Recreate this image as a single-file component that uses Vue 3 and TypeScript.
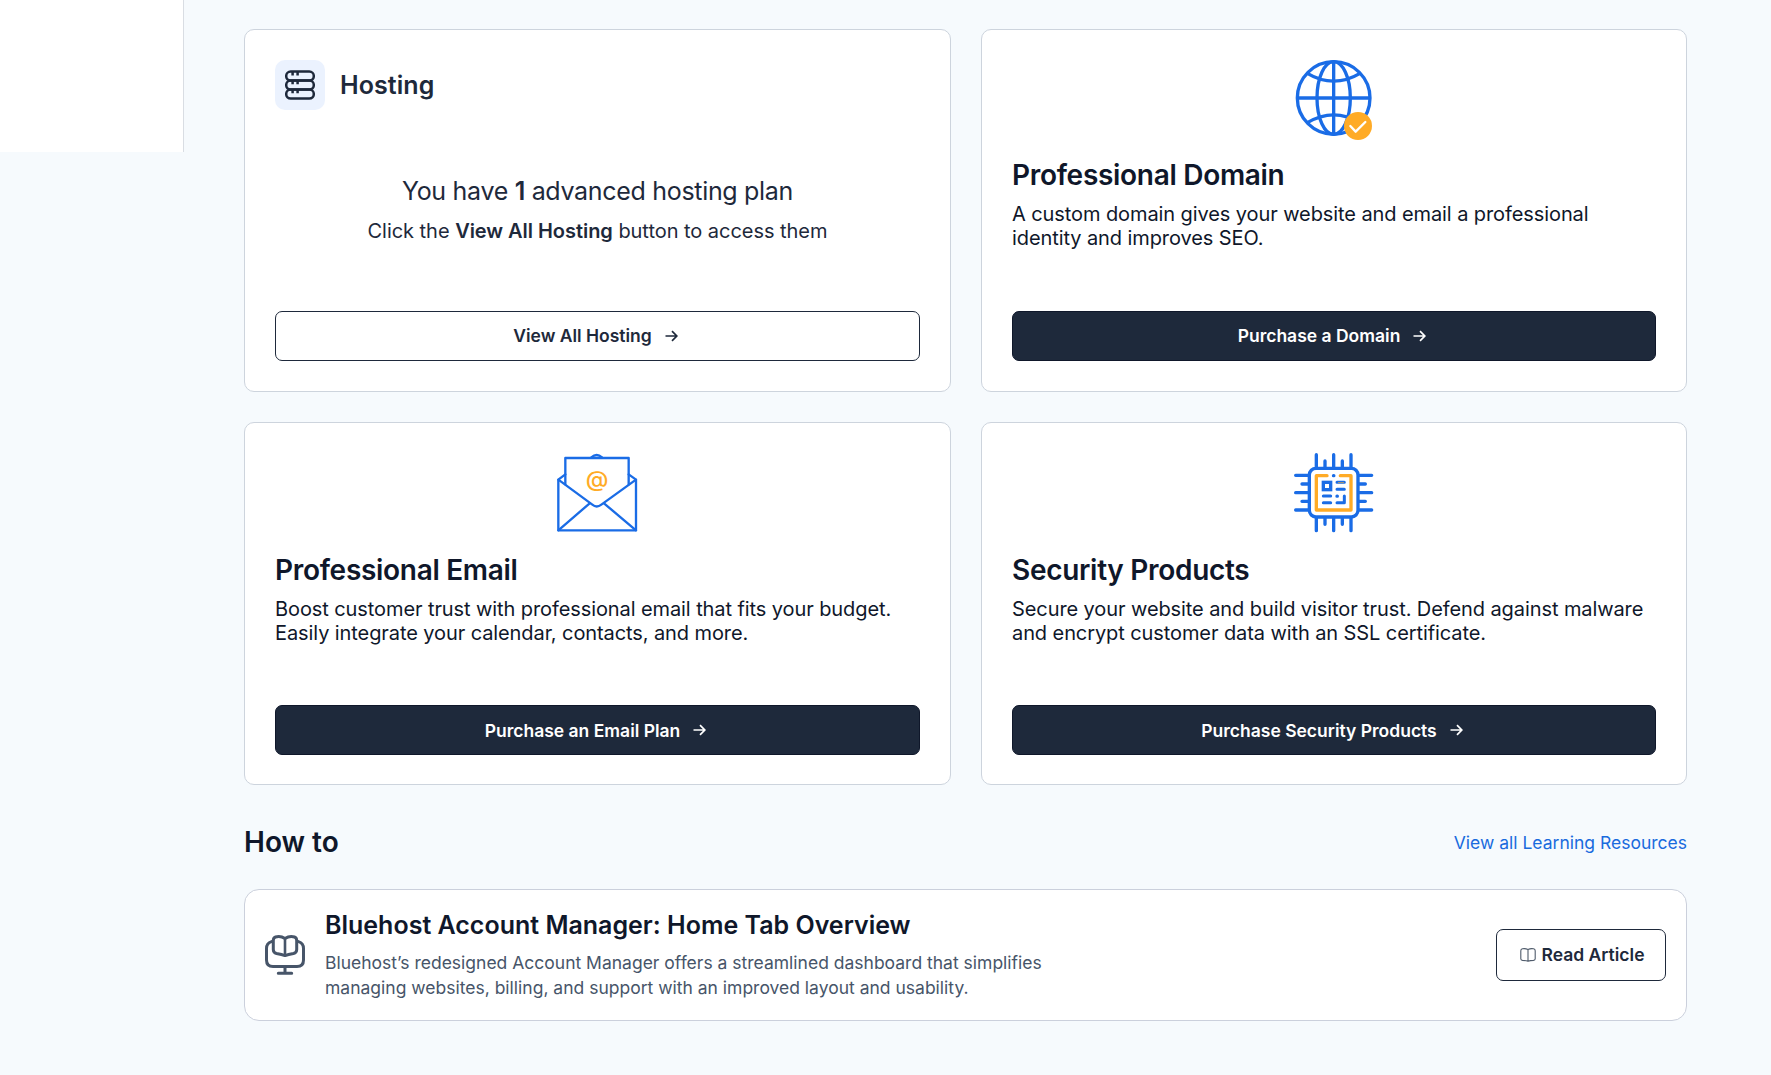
<script setup lang="ts">
interface Product {
  id: 'domain' | 'email' | 'security'
  title: string
  lines: string[]
  action: string
}

const products: Product[] = [
  {
    id: 'domain',
    title: 'Professional Domain',
    lines: ['A custom domain gives your website and email a professional', 'identity and improves SEO.'],
    action: 'Purchase a Domain',
  },
  {
    id: 'email',
    title: 'Professional Email',
    lines: ['Boost customer trust with professional email that fits your budget.', 'Easily integrate your calendar, contacts, and more.'],
    action: 'Purchase an Email Plan',
  },
  {
    id: 'security',
    title: 'Security Products',
    lines: ['Secure your website and build visitor trust. Defend against malware', 'and encrypt customer data with an SSL certificate.'],
    action: 'Purchase Security Products',
  },
]
</script>

<template>
  <div class="page">
    <aside class="sidebar"></aside>
    <main class="content">
      <section class="grid">
        <article class="card">
          <header class="card-head">
            <span class="badge">
              <svg width="30" height="30" viewBox="0 0 30 30" fill="none" stroke="#1e293b" stroke-width="2.5">
                <rect x="1.2" y="1.6" width="27.6" height="9" rx="4.5" />
                <rect x="1.2" y="10.6" width="27.6" height="9" rx="4.5" />
                <rect x="1.2" y="19.6" width="27.6" height="9" rx="4.5" />
                <path d="M7.6 2v3.4M12.6 2v3.4M7.6 11v3.2M12.6 11v3.2M7.6 20v3.2M12.6 20v3.2" />
              </svg>
            </span>
            <h2 class="head-title">Hosting</h2>
          </header>
          <div class="summary">
            <p class="plan">You have <b>1</b> advanced hosting plan</p>
            <p class="hint">Click the <b>View All Hosting</b> button to access them</p>
          </div>
          <button class="btn outline">
            <span>View All Hosting</span>
            <svg class="arrow" width="13" height="12" viewBox="0 0 13 12"><path d="M0.5 6H12M7 1.2L11.8 6L7 10.8" /></svg>
          </button>
        </article>

        <article v-for="p in products" :key="p.id" class="card" :class="p.id">
          <svg v-if="p.id === 'domain'" class="art" viewBox="72 60 240 240" fill="none" stroke="#1a6ce6" stroke-width="10">
            <circle cx="191" cy="174" r="109" />
            <path d="M191 64V284M81 174H301" />
            <ellipse cx="191" cy="174" rx="50" ry="109" />
            <path d="M112 100Q191 147 270 100M112 248Q191 201 270 248" />
            <circle cx="264" cy="258" r="42" fill="#ffab26" stroke="none" />
            <path d="M241 258L257 275L286 246" stroke="#fff" stroke-width="7" stroke-linecap="round" stroke-linejoin="round" />
          </svg>
          <svg v-else-if="p.id === 'email'" class="art" viewBox="84 39 240 240" fill="none" stroke="#1a6ce6" stroke-width="7" stroke-linejoin="round" stroke-linecap="round">
            <path d="M106 133V54H296V133" />
            <path d="M184 52Q200 38 216 52" />
            <path d="M106 103L85 119V271H318V119L296 103" />
            <path d="M85 119L187 194Q200 205 214 194L318 119" />
            <path d="M85 271L179 190M318 271L222 190" />
            <text x="201" y="141" text-anchor="middle" textLength="68" lengthAdjust="spacingAndGlyphs" class="at">@</text>
          </svg>
          <svg v-else class="art" viewBox="72 39 240 240" fill="none" stroke="#1a6ce6" stroke-width="10" stroke-linecap="round" stroke-linejoin="round">
            <rect x="118" y="85" width="146" height="146" rx="20" />
            <path d="M139 44V82M191 44V82M243 44V82M165 63V82M217 63V82" />
            <path d="M139 234V272M191 234V272M243 234V272M165 234V253M217 234V253" />
            <path d="M77 106H115M77 158H115M77 210H115M96 132H115M96 184H115" />
            <path d="M267 106H305M267 158H305M267 210H305M267 132H286M267 184H286" />
            <path d="M171 107H139V210H243V107H211" stroke="#ffab26" />
            <path d="M190.500 107H191.500M201 168.500H202" />
            <rect x="160" y="127" width="22" height="22" stroke-linejoin="miter" />
            <path d="M201 127H223M201 148H223M160 168H182M160 188H182M201 188H223V168" stroke-width="9" />
            <path d="M205 128H221" stroke="#b59a68" stroke-width="3" />
          </svg>
          <h2 class="title">{{ p.title }}</h2>
          <p class="desc"><span v-for="line in p.lines" :key="line">{{ line }}</span></p>
          <button class="btn solid">
            <span>{{ p.action }}</span>
            <svg class="arrow" width="13" height="12" viewBox="0 0 13 12"><path d="M0.5 6H12M7 1.2L11.8 6L7 10.8" /></svg>
          </button>
        </article>
      </section>

      <header class="howto-head">
        <h2 class="howto-title">How to</h2>
        <a class="all-link">View all Learning Resources</a>
      </header>

      <article class="howto">
        <svg class="monitor" width="40" height="40" viewBox="0 0 40 40" fill="none" stroke="#475569" stroke-width="3" stroke-linecap="round" stroke-linejoin="round">
          <path d="M6.500 6.600Q1.500 8 1.500 13.500V25Q1.500 31.500 8 31.500H32Q38.500 31.500 38.500 25V13.500Q38.500 8 33.500 6.600" />
          <path d="M20 3.600Q15.500 0.500 10.500 2Q8.300 2.700 8.300 5.500V14.500Q8.300 17.700 11.500 18.500Q17 19.300 20 20.600Q23 19.300 28.500 18.500Q31.700 17.700 31.700 14.500V5.500Q31.700 2.700 29.500 2Q24.500 0.500 20 3.600" />
          <path d="M20 4V20" stroke-width="2.600" />
          <path d="M20 32V38M13.300 38.300H26.700" />
        </svg>
        <div class="howto-text">
          <h3>Bluehost Account Manager: Home Tab Overview</h3>
          <p><span>Bluehost’s redesigned Account Manager offers a streamlined dashboard that simplifies</span><span>managing websites, billing, and support with an improved layout and usability.</span></p>
        </div>
        <button class="read">
          <svg width="16" height="14" viewBox="0 0 16 14" fill="none" stroke="#4f5b6b" stroke-width="1.100" stroke-linejoin="round">
            <path d="M8 1.500Q5.500 0.300 2.500 0.800Q0.800 1.100 0.800 2.800V10.800Q0.800 12.300 2.500 12.400Q6 12.400 8 13.300Q10 12.400 13.500 12.400Q15.200 12.300 15.200 10.800V2.800Q15.200 1.100 13.500 0.800Q10.500 0.300 8 1.500V13" />
          </svg>
          <span>Read Article</span>
        </button>
      </article>
    </main>
  </div>
</template>

<style>
body {
  background: #f6fafd;
}
</style>

<style scoped>
.page {
  box-sizing: border-box;
  display: flex;
  align-items: flex-start;
  height: 1075px;
  overflow: hidden;
  background: #f6fafd;
  color: #0f172a;
  font-family: Inter, "Liberation Sans", sans-serif;
}
.page * {
  box-sizing: border-box;
}
h2, h3, p {
  margin: 0;
}
.sidebar {
  width: 184px;
  height: 152px;
  flex: none;
  background: #fff;
  border-right: 1px solid #d9dde3;
}
.content {
  width: 1443px;
  margin-left: 60px;
  padding-top: 29px;
  flex: none;
}
.grid {
  display: grid;
  grid-template-columns: 707px 706px;
  grid-auto-rows: 363px;
  gap: 30px;
}
.card {
  display: flex;
  flex-direction: column;
  padding: 30px;
  background: #fff;
  border: 1px solid #cdd4dd;
  border-radius: 10px;
}
.card.email, .card.security {
  padding-bottom: 29px;
}
.card-head {
  display: flex;
  align-items: center;
  gap: 15px;
}
.badge {
  display: flex;
  align-items: center;
  justify-content: center;
  width: 50px;
  height: 50px;
  border-radius: 10px;
  background: #ebf2fe;
}
.head-title {
  font-size: 25px;
  font-weight: 600;
  letter-spacing: 0.08px;
  line-height: 30px;
  color: #1e293b;
}
.summary {
  margin-top: 64px;
  text-align: center;
  color: #1e293b;
}
.summary b {
  font-weight: 600;
}
.plan {
  font-size: 25px;
  letter-spacing: -0.31px;
  line-height: 34px;
}
.hint {
  margin-top: 11px;
  font-size: 20px;
  letter-spacing: -0.04px;
  line-height: 24px;
}
.art {
  width: 80px;
  height: 80px;
  align-self: center;
  flex: none;
  overflow: visible;
}
.at {
  font-family: Inter, sans-serif;
  font-size: 66px;
  font-weight: 500;
  fill: #ffab26;
  stroke: none;
}
.title {
  margin-top: 18px;
  font-size: 28px;
  font-weight: 600;
  letter-spacing: -0.3px;
  line-height: 34px;
}
.email .title, .security .title {
  margin-top: 20px;
}
.desc {
  margin-top: 10px;
  font-size: 20px;
  letter-spacing: -0.09px;
  line-height: 24px;
}
.desc span, .howto-text p span {
  display: block;
  white-space: nowrap;
}
.btn {
  display: flex;
  align-items: center;
  justify-content: center;
  gap: 13px;
  width: 100%;
  height: 50px;
  margin-top: auto;
  padding: 0 4px 1px 0;
  border: 1px solid #1e293b;
  border-radius: 7px;
  font: 600 17.5px Inter, sans-serif;
}
.email .btn span, .security .btn span {
  padding-top: 1px;
}
.outline {
  background: #fff;
  color: #1e293b;
}
.solid {
  background: #1e293b;
  border-color: #0f172a;
  color: #fff;
}
.arrow {
  fill: none;
  stroke: currentColor;
  stroke-width: 1.7;
}
.howto-head {
  display: flex;
  align-items: center;
  justify-content: space-between;
  height: 34px;
  margin-top: 40px;
}
.howto-title {
  font-size: 28px;
  font-weight: 600;
}
.all-link {
  font-size: 17.5px;
  color: #196bde;
}
.howto {
  display: flex;
  align-items: center;
  height: 132px;
  margin-top: 30px;
  padding: 0 20px;
  background: #fff;
  border: 1px solid #cbd0dc;
  border-radius: 15px;
}
.monitor {
  flex: none;
}
.howto-text {
  margin-left: 20px;
  flex: 1;
}
.howto-text h3 {
  font-size: 25px;
  font-weight: 600;
  line-height: 30px;
}
.howto-text p {
  margin-top: 10px;
  font-size: 17.5px;
  line-height: 25px;
  color: #475569;
}
.read {
  display: flex;
  align-items: center;
  justify-content: center;
  gap: 6px;
  width: 170px;
  height: 52px;
  padding: 0 0 1px 2px;
  background: #fff;
  border: 1px solid #1e293b;
  border-radius: 7px;
  color: #1e293b;
  font: 600 17.5px Inter, sans-serif;
}
</style>
